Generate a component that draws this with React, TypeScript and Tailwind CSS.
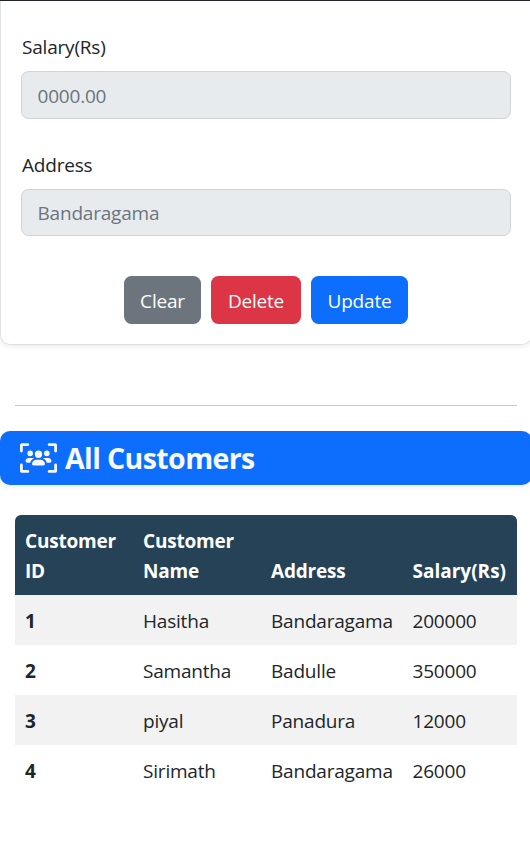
import { FaUsersViewfinder } from "react-icons/fa6";

const customers = [
  { id: 1, name: "Hasitha", address: "Bandaragama", salary: 200000 },
  { id: 2, name: "Samantha", address: "Badulle", salary: 350000 },
  { id: 3, name: "piyal", address: "Panadura", salary: 12000 },
  { id: 4, name: "Sirimath", address: "Bandaragama", salary: 26000 },
];

function Field({ label, value, className }: { label: string; value: string; className: string }) {
  return (
    <div>
      <label className="block h-[30px] pl-px tracking-[-0.2px]">{label}</label>
      <div className={`mt-[9px] flex items-center rounded-[7.5px] border border-[#ced4da] bg-[#e7ebee] pl-[15.5px] text-[#6c757d] ${className}`}>
        {value}
      </div>
    </div>
  );
}

export default function App() {
  return (
    <div className="h-[842px] w-[530px] overflow-hidden bg-white font-['Open_Sans',sans-serif] text-[19px] leading-[30px] font-[370] tracking-[-0.2px] text-[#212529]">
      <div className="h-px bg-[#212529]" />
      <section className="h-[344px] w-[532px] rounded-b-[10px] border border-t-0 border-[#dee2e6] px-5 pt-[31px] shadow-[0_2px_5px_rgba(0,0,0,0.075)]">
        <Field label="Salary(Rs)" value="0000.00" className="h-12 pt-[2px]" />
        <div className="h-[31px]" />
        <Field label="Address" value="Bandaragama" className="h-[47px]" />
        <div className="mt-10 flex justify-center gap-[10px] text-white">
          <button className="h-12 w-[77px] rounded-[7.5px] bg-[#6c757d] pt-[2px]">Clear</button>
          <button className="h-12 w-[90px] rounded-[7.5px] bg-[#dc3545] pt-[2px]">Delete</button>
          <button className="h-12 w-[97px] rounded-[7.5px] bg-[#0d6efd] pt-[2px]">Update</button>
        </div>
      </section>
      <hr className="mt-[60px] ml-[15px] w-[502px] border-t border-[#c7c8c9]" />
      <h2 className="mt-[25px] flex h-[54px] w-[532px] items-center rounded-[10px] bg-[#0d6efd] pl-[20px] text-[28.5px] font-bold tracking-[-0.6px] text-[#f8f9fa] shadow-[0_2px_5px_rgba(0,0,0,0.075)]">
        <FaUsersViewfinder className="h-[30px] w-[37px] shrink-0" />
        <span className="ml-[8px]">All Customers</span>
      </h2>
      <div className="mt-[30px] ml-[15px] w-[502px] overflow-hidden rounded-t-[6px]">
        <table className="w-full table-fixed border-collapse text-left">
          <colgroup>
            <col className="w-[118px]" />
            <col className="w-[128px]" />
            <col className="w-[142px]" />
            <col className="w-[114px]" />
          </colgroup>
          <thead className="bg-[#264257] font-bold tracking-[-0.2px] text-white">
            <tr className="h-20">
              <th className="px-[10px] pt-[11px] pb-[9px] align-bottom">Customer<br />ID</th>
              <th className="px-[10px] pt-[11px] pb-[9px] align-bottom">Customer<br />Name</th>
              <th className="px-[10px] pt-[11px] pb-[9px] align-bottom">Address</th>
              <th className="pt-[11px] pb-[9px] pl-[9.5px] align-bottom tracking-[0px]">Salary(Rs)</th>
            </tr>
          </thead>
          <tbody>
            {customers.map((c) => (
              <tr key={c.id} className="h-[50px] odd:bg-[#f2f2f2]">
                <th className="px-[10px] pt-[2px] font-bold">{c.id}</th>
                <td className="px-[10px] pt-[2px]">{c.name}</td>
                <td className="px-[10px] pt-[2px]">{c.address}</td>
                <td className="pt-[2px] pl-[9.5px]">{c.salary}</td>
              </tr>
            ))}
          </tbody>
        </table>
      </div>
    </div>
  );
}
